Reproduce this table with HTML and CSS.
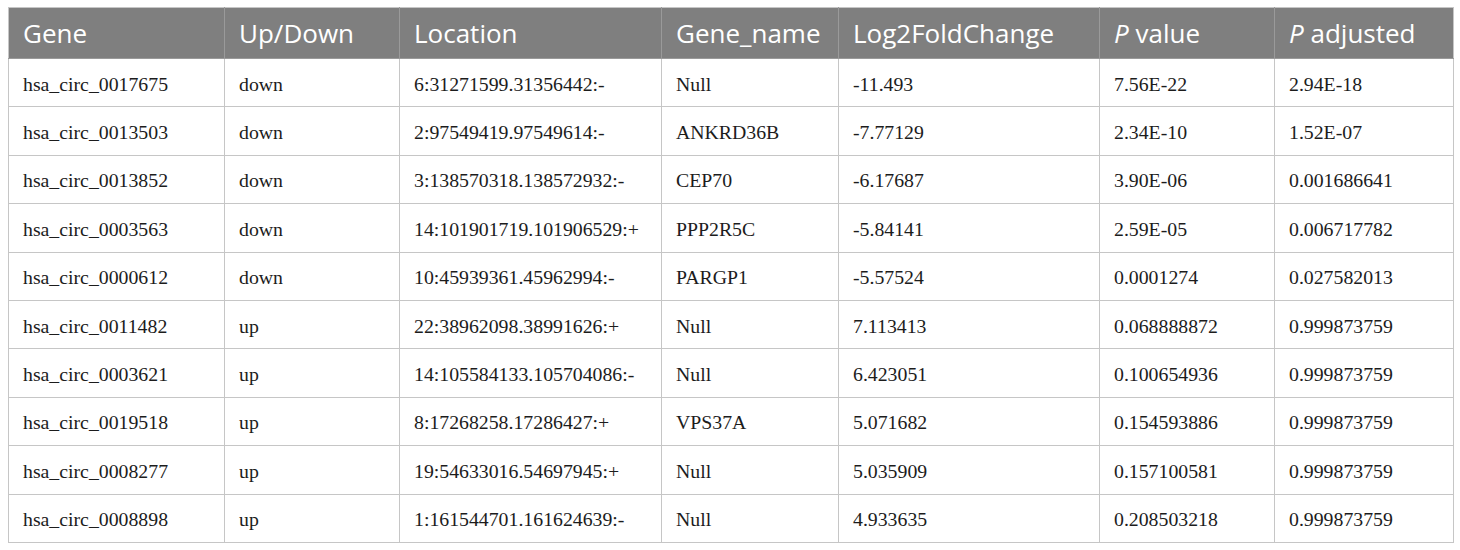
FILE: index.html
```html
<!DOCTYPE html>
<html>
<head>
<meta charset="utf-8">
<link rel="stylesheet" href="styles.css">
</head>
<body>
<table class="data">
  <colgroup>
    <col class="c1"><col class="c2"><col class="c3"><col class="c4"><col class="c5"><col class="c6"><col class="c7">
  </colgroup>
  <thead>
    <tr>
      <th>Gene</th><th>Up/Down</th><th>Location</th><th>Gene_name</th><th>Log2FoldChange</th><th><i>P</i> value</th><th><i>P</i> adjusted</th>
    </tr>
  </thead>
  <tbody>
    <tr><td>hsa_circ_0017675</td><td>down</td><td>6:31271599.31356442:-</td><td>Null</td><td>-11.493</td><td>7.56E-22</td><td>2.94E-18</td></tr>
    <tr><td>hsa_circ_0013503</td><td>down</td><td>2:97549419.97549614:-</td><td>ANKRD36B</td><td>-7.77129</td><td>2.34E-10</td><td>1.52E-07</td></tr>
    <tr><td>hsa_circ_0013852</td><td>down</td><td>3:138570318.138572932:-</td><td>CEP70</td><td>-6.17687</td><td>3.90E-06</td><td>0.001686641</td></tr>
    <tr><td>hsa_circ_0003563</td><td>down</td><td>14:101901719.101906529:+</td><td>PPP2R5C</td><td>-5.84141</td><td>2.59E-05</td><td>0.006717782</td></tr>
    <tr><td>hsa_circ_0000612</td><td>down</td><td>10:45939361.45962994:-</td><td>PARGP1</td><td>-5.57524</td><td>0.0001274</td><td>0.027582013</td></tr>
    <tr><td>hsa_circ_0011482</td><td>up</td><td>22:38962098.38991626:+</td><td>Null</td><td>7.113413</td><td>0.068888872</td><td>0.999873759</td></tr>
    <tr><td>hsa_circ_0003621</td><td>up</td><td>14:105584133.105704086:-</td><td>Null</td><td>6.423051</td><td>0.100654936</td><td>0.999873759</td></tr>
    <tr><td>hsa_circ_0019518</td><td>up</td><td>8:17268258.17286427:+</td><td>VPS37A</td><td>5.071682</td><td>0.154593886</td><td>0.999873759</td></tr>
    <tr><td>hsa_circ_0008277</td><td>up</td><td>19:54633016.54697945:+</td><td>Null</td><td>5.035909</td><td>0.157100581</td><td>0.999873759</td></tr>
    <tr><td>hsa_circ_0008898</td><td>up</td><td>1:161544701.161624639:-</td><td>Null</td><td>4.933635</td><td>0.208503218</td><td>0.999873759</td></tr>
  </tbody>
</table>
</body>
</html>
```

FILE: styles.css
```css
html, body {
  margin: 0;
  padding: 0;
  background: #ffffff;
}
body {
  padding: 7px 8px 0 8px;
}
.data {
  border-collapse: collapse;
  table-layout: fixed;
  width: 1445px;
}
.c1 { width: 216px; }
.c2 { width: 175px; }
.c3 { width: 262px; }
.c4 { width: 177px; }
.c5 { width: 261px; }
.c6 { width: 175px; }
.c7 { width: 179px; }
.data th, .data td {
  border: 1px solid #c6c6c6;
  text-align: left;
  padding: 0 0 0 14px;
  white-space: nowrap;
  overflow: hidden;
}
.data thead th {
  background: #7f7f7f;
  color: #ffffff;
  font-family: "Open Sans", "Liberation Sans", sans-serif;
  font-weight: 400;
  font-size: 26px;
  height: 49px;
  padding-bottom: 1px;
  line-height: 1;
  border-color: #9a9a9a;
  border-top-color: #c6c6c6;
}
.data thead th:first-child { border-left-color: #c6c6c6; }
.data thead th:last-child { border-right-color: #c6c6c6; }
.data thead th i {
  font-style: italic;
}
.data tbody td {
  font-family: "Liberation Serif", "Times New Roman", serif;
  font-size: 19.8px;
  color: #1c1c1c;
  height: 44.4px;
  padding-top: 3px;
}
```
